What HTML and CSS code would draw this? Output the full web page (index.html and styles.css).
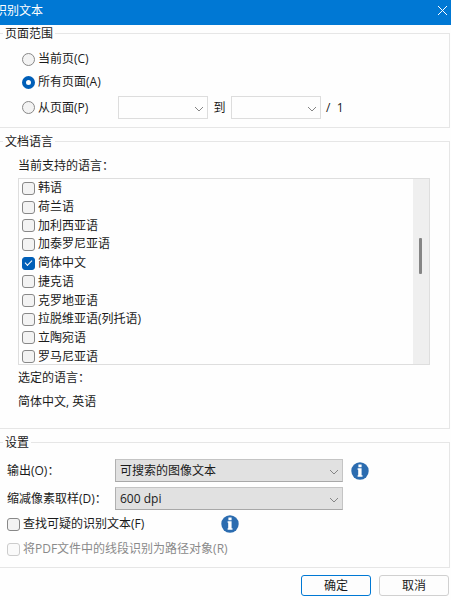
FILE: index.html
```html
<!DOCTYPE html>
<html lang="zh-CN">
<head>
    <meta charset="UTF-8">
    <meta name="viewport" content="width=device-width, initial-scale=1.0">
    <title>识别文本</title>
    <link rel="stylesheet" href="styles.css">
</head>
<body>
    <header class="titlebar">
        <h1>识别文本</h1>
        <button class="close" type="button" aria-label="关闭">
            <svg width="11" height="11" viewBox="0 0 11 11"><path d="M1 1l9 9M10 1l-9 9"/></svg>
        </button>
    </header>

    <form class="dialog">
        <fieldset class="range">
            <legend>页面范围</legend>
            <div class="row">
                <input type="radio" name="range" id="current">
                <label for="current">当前页(C)</label>
            </div>
            <div class="row">
                <input type="radio" name="range" id="all" checked>
                <label for="all">所有页面(A)</label>
            </div>
            <div class="row">
                <input type="radio" name="range" id="from">
                <label class="from-label" for="from">从页面(P)</label>
                <div class="combo page">
                    <select id="first" aria-label="起始页"><option></option></select>
                    <svg width="10" height="6" viewBox="0 0 10 6"><path d="M1 1l4 4 4-4"/></svg>
                </div>
                <label class="to-label" for="last">到</label>
                <div class="combo page">
                    <select id="last"><option></option></select>
                    <svg width="10" height="6" viewBox="0 0 10 6"><path d="M1 1l4 4 4-4"/></svg>
                </div>
                <span class="total">/ &nbsp;1</span>
            </div>
        </fieldset>

        <fieldset class="language">
            <legend>文档语言</legend>
            <div class="content">
                <p>当前支持的语言：</p>
                <div class="list">
                    <ul>
                        <li><input type="checkbox" id="ko"><label for="ko">韩语</label></li>
                        <li><input type="checkbox" id="nl"><label for="nl">荷兰语</label></li>
                        <li><input type="checkbox" id="gl"><label for="gl">加利西亚语</label></li>
                        <li><input type="checkbox" id="ca"><label for="ca">加泰罗尼亚语</label></li>
                        <li><input type="checkbox" id="zh" checked><label for="zh">简体中文</label></li>
                        <li><input type="checkbox" id="cs"><label for="cs">捷克语</label></li>
                        <li><input type="checkbox" id="hr"><label for="hr">克罗地亚语</label></li>
                        <li><input type="checkbox" id="lv"><label for="lv">拉脱维亚语(列托语)</label></li>
                        <li><input type="checkbox" id="lt"><label for="lt">立陶宛语</label></li>
                        <li><input type="checkbox" id="ro"><label for="ro">罗马尼亚语</label></li>
                    </ul>
                    <div class="track"><div class="thumb"></div></div>
                </div>
                <p>选定的语言：</p>
                <p class="selected">简体中文, 英语</p>
            </div>
        </fieldset>

        <fieldset class="settings">
            <legend>设置</legend>
            <div class="content">
                <div class="field">
                    <label for="output">输出(O)：</label>
                    <div class="combo filled">
                        <select id="output"><option>可搜索的图像文本</option></select>
                        <svg width="10" height="6" viewBox="0 0 10 6"><path d="M1 1l4 4 4-4"/></svg>
                    </div>
                    <svg class="info" width="18" height="18" viewBox="0 0 18 18">
                        <circle cx="9" cy="9" r="8.7"/>
                        <path d="M7.4 2.6h3.2v2.6H7.4zM6.6 6.3h4v7h.9v1.5H6.6v-1.5h.6V7.8h-.6z"/>
                    </svg>
                </div>
                <div class="field">
                    <label for="sampling">缩减像素取样(D)：</label>
                    <div class="combo filled">
                        <select id="sampling"><option>600 dpi</option></select>
                        <svg width="10" height="6" viewBox="0 0 10 6"><path d="M1 1l4 4 4-4"/></svg>
                    </div>
                </div>
                <div class="row">
                    <input type="checkbox" id="suspects">
                    <label class="suspects-label" for="suspects">查找可疑的识别文本(F)</label>
                    <svg class="info" width="18" height="18" viewBox="0 0 18 18">
                        <circle cx="9" cy="9" r="8.7"/>
                        <path d="M7.4 2.6h3.2v2.6H7.4zM6.6 6.3h4v7h.9v1.5H6.6v-1.5h.6V7.8h-.6z"/>
                    </svg>
                </div>
                <div class="row">
                    <input type="checkbox" id="lines" disabled>
                    <label for="lines">将PDF文件中的线段识别为路径对象(R)</label>
                </div>
            </div>
        </fieldset>

        <div class="buttons">
            <button class="primary" type="button">确定</button>
            <button type="button">取消</button>
        </div>
    </form>
</body>
</html>
```
FILE: styles.css
```css
* {
    box-sizing: border-box;
}

body {
    margin: 0;
    background-color: #fefefe;
    color: #1a1a1a;
    overflow-x: hidden;
}

body, button, select {
    font-family: "Open Sans", "Noto Sans CJK SC", sans-serif;
    font-size: 12px;
    line-height: 18px;
}

.titlebar {
    display: flex;
    align-items: center;
    justify-content: space-between;
    height: 25px;
    padding: 0 3px 4px 0;
    background-color: #0078d4;
    color: #fff;
}

/* the title runs off the left edge of the window */
.titlebar h1 {
    margin: 0 0 0 -5px;
    font-size: 12px;
    font-weight: normal;
}

.close {
    display: flex;
    padding: 0;
    border: 0;
    background: none;
}

svg path {
    fill: none;
    stroke: #fff;
}

fieldset {
    min-width: 0;
    margin: 0 1px 5px 0;
    padding: 0;
    border: 1px solid #e6e6e6;
    border-left: 0;
}

legend {
    height: 16px;
    margin-left: 3px;
    padding: 0 2px;
    line-height: 18px;
}

.row {
    display: flex;
    align-items: center;
    min-height: 18px;
}

.range .row {
    margin-top: 5px;
    padding-left: 22px;
}

.range legend + .row {
    margin-top: 9px;
}

.range {
    padding-bottom: 8px;
}

input {
    appearance: none;
    flex: none;
    display: grid;
    place-items: center;
    width: 13px;
    height: 13px;
    margin: 0 3px 0 0;
    border: 1px solid #888;
    border-radius: 3px;
    background-color: #f3f3f3;
}

input[type="radio"] {
    border-radius: 50%;
}

input[type="radio"]:checked {
    border: 4px solid #005fb8;
    background-color: #fff;
}

input[type="checkbox"]:checked {
    border-color: #005fb8;
    background-color: #005fb8;
}

input[type="checkbox"]:checked::after {
    content: "";
    width: 6px;
    height: 3px;
    margin-bottom: 2px;
    border: solid #fff;
    border-width: 0 0 1px 1px;
    transform: rotate(-45deg);
}

input:disabled {
    border-color: #ccc;
    background-color: #fafafa;
}

input:disabled + label {
    color: #8a8a8a;
}

.from-label {
    width: 80px;
}

.to-label {
    width: 23px;
    text-align: center;
}

.total {
    padding-left: 5px;
}

.combo {
    display: grid;
    align-items: center;
}

.combo select,
.combo svg {
    grid-area: 1 / 1;
}

.combo select {
    appearance: none;
    width: 100%;
    height: 23px;
    margin: 0;
    padding: 0 20px 0 4px;
    border: 1px solid #ddd;
    border-radius: 0;
    background-color: #fefefe;
    color: inherit;
}

.combo svg {
    justify-self: end;
    margin: 2px 4px 0 0;
    pointer-events: none;
}

.combo path {
    stroke: #858585;
}

.page {
    width: 90px;
}

.filled select {
    border-color: #c4c4c4 #c4c4c4 #a8a8a8 #b0b0b0;
    background-color: #e1e1e1;
}

.language .content {
    padding: 8px 19px 17px 18px;
}

p {
    margin: 0;
}

.list {
    display: flex;
    height: 187px;
    margin: 3px 0 4px;
    border: 1px solid #dedede;
    overflow: hidden;
}

.list ul {
    flex: 1;
    display: grid;
    grid-template-rows: repeat(10, 1fr);
    height: 187px;
    margin: 0;
    padding: 0 0 0 3px;
    list-style: none;
}

.list li {
    display: flex;
    align-items: center;
}

.track {
    width: 16px;
    background-color: #efefef;
}

.thumb {
    width: 3px;
    height: 36px;
    margin: 59px 0 0 6px;
    border-radius: 1px;
    background-color: #858585;
}

.selected {
    margin-top: 6px;
}

.settings .content {
    padding: 9px 0 9px 7px;
}

.field {
    display: grid;
    grid-template-columns: 108px minmax(0, 228px) auto;
    align-items: center;
    margin-bottom: 5px;
}

.field .info {
    margin-left: 8px;
}

.info circle {
    fill: #2b6cb0;
}

.info path {
    fill: #fff;
    stroke: none;
}

.suspects-label {
    width: 198px;
}

.settings .row + .row {
    margin-top: 7px;
}

.buttons {
    display: flex;
    justify-content: flex-end;
    gap: 8px;
    padding: 2px 2px 0 0;
}

.buttons button {
    width: 70px;
    height: 21px;
    padding: 0;
    border: 1px solid #d0d0d0;
    border-radius: 3px;
    background-color: #fdfdfd;
    color: inherit;
}

.buttons .primary {
    border-color: #0078d4;
}
```
